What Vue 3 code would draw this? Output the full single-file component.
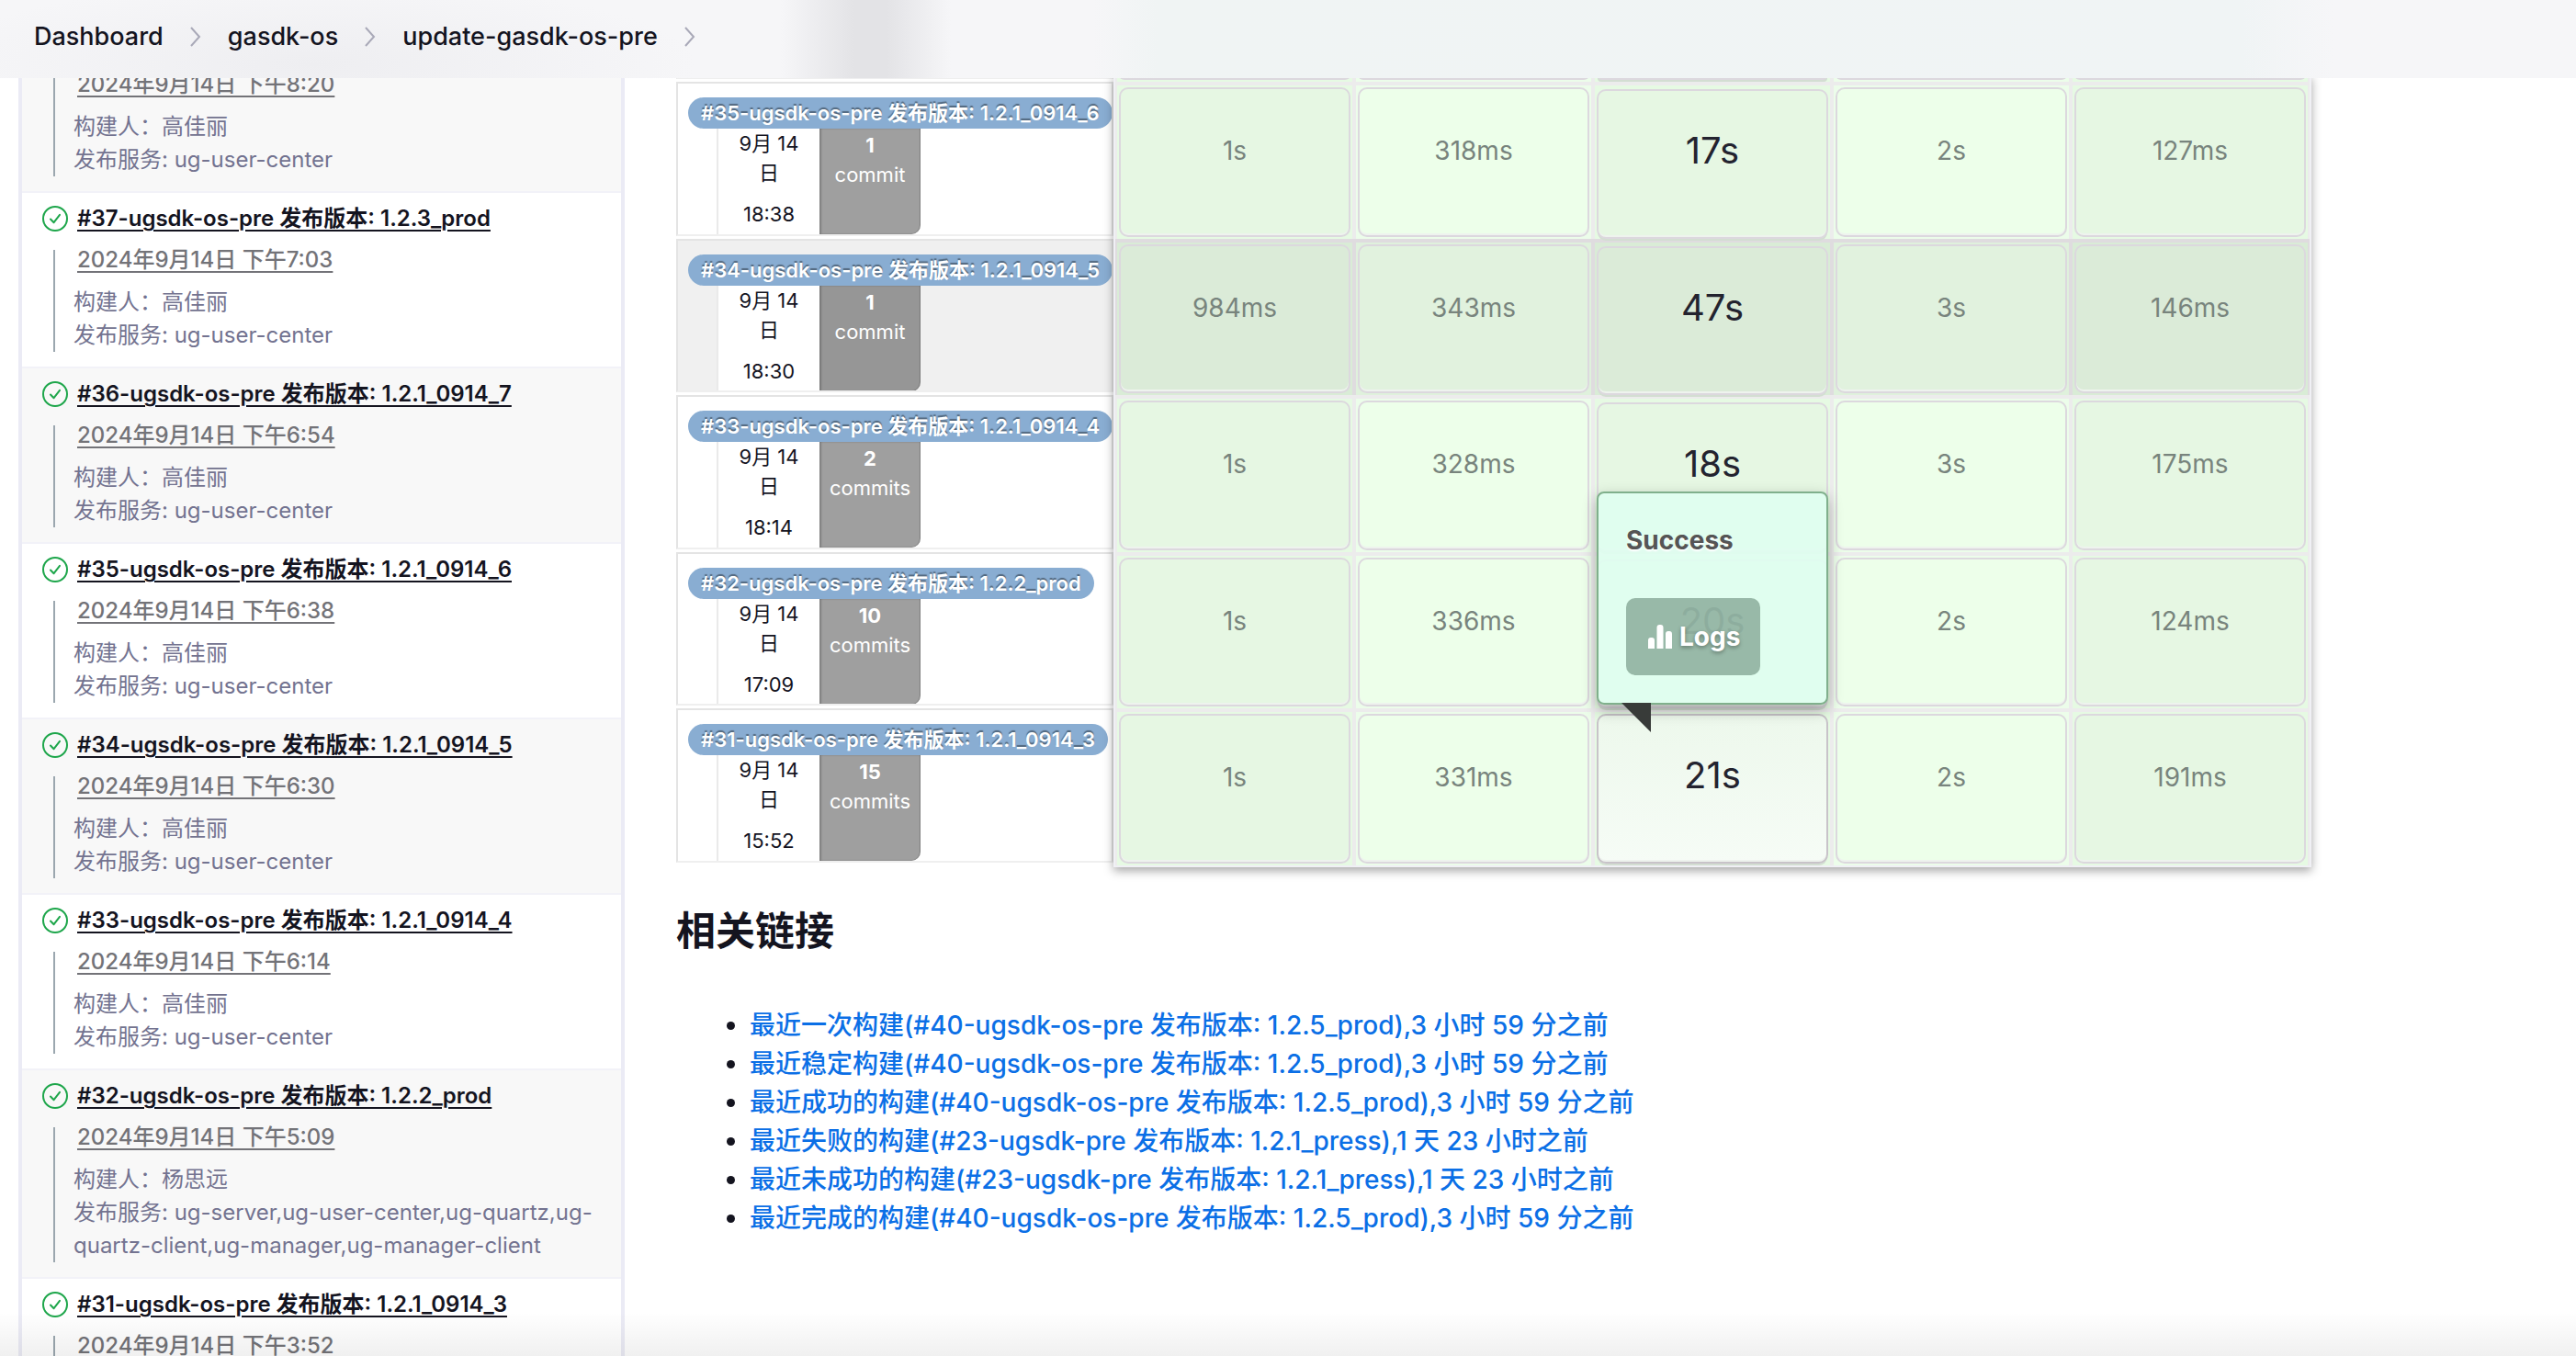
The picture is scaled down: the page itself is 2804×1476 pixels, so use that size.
<script setup>
const crumbs = ['Dashboard', 'gasdk-os', 'update-gasdk-os-pre']

const history = [
  { id: 38, time: '下午8:20', user: '高佳丽', services: 'ug-user-center' },
  { id: 37, title: '#37-ugsdk-os-pre 发布版本: 1.2.3_prod', time: '下午7:03', user: '高佳丽', services: 'ug-user-center' },
  { id: 36, title: '#36-ugsdk-os-pre 发布版本: 1.2.1_0914_7', time: '下午6:54', user: '高佳丽', services: 'ug-user-center' },
  { id: 35, title: '#35-ugsdk-os-pre 发布版本: 1.2.1_0914_6', time: '下午6:38', user: '高佳丽', services: 'ug-user-center' },
  { id: 34, title: '#34-ugsdk-os-pre 发布版本: 1.2.1_0914_5', time: '下午6:30', user: '高佳丽', services: 'ug-user-center' },
  { id: 33, title: '#33-ugsdk-os-pre 发布版本: 1.2.1_0914_4', time: '下午6:14', user: '高佳丽', services: 'ug-user-center' },
  { id: 32, title: '#32-ugsdk-os-pre 发布版本: 1.2.2_prod', time: '下午5:09', user: '杨思远', services: 'ug-server,ug-user-center,ug-quartz,ug-quartz-client,ug-manager,ug-manager-client' },
  { id: 31, title: '#31-ugsdk-os-pre 发布版本: 1.2.1_0914_3', time: '下午3:52' }
]

const runs = [
  { id: 35, version: '1.2.1_0914_6', time: '18:38', commits: 1, stages: ['1s', '318ms', '17s', '2s', '127ms'] },
  { id: 34, version: '1.2.1_0914_5', time: '18:30', commits: 1, stages: ['984ms', '343ms', '47s', '3s', '146ms'], hovered: true },
  { id: 33, version: '1.2.1_0914_4', time: '18:14', commits: 2, stages: ['1s', '328ms', '18s', '3s', '175ms'] },
  { id: 32, version: '1.2.2_prod', time: '17:09', commits: 10, stages: ['1s', '336ms', '20s', '2s', '124ms'] },
  { id: 31, version: '1.2.1_0914_3', time: '15:52', commits: 15, stages: ['1s', '331ms', '21s', '2s', '191ms'], popup: 2 }
]

const links = [
  '最近一次构建(#40-ugsdk-os-pre 发布版本: 1.2.5_prod),3 小时 59 分之前',
  '最近稳定构建(#40-ugsdk-os-pre 发布版本: 1.2.5_prod),3 小时 59 分之前',
  '最近成功的构建(#40-ugsdk-os-pre 发布版本: 1.2.5_prod),3 小时 59 分之前',
  '最近失败的构建(#23-ugsdk-pre 发布版本: 1.2.1_press),1 天 23 小时之前',
  '最近未成功的构建(#23-ugsdk-pre 发布版本: 1.2.1_press),1 天 23 小时之前',
  '最近完成的构建(#40-ugsdk-os-pre 发布版本: 1.2.5_prod),3 小时 59 分之前'
]
</script>

<template>
  <div class="page">
    <header class="topbar">
      <nav class="crumbs" aria-label="Breadcrumb">
        <template v-for="c in crumbs" :key="c">
          <a href="#">{{ c }}</a>
          <svg class="chevron" width="12" height="22" viewBox="0 0 12 22" aria-hidden="true">
            <path d="M1 1l9 10-9 10" />
          </svg>
        </template>
      </nav>
    </header>

    <div class="workspace">
      <aside class="sidebar">
        <ul class="history">
          <li v-for="b in history" :key="b.id" class="build" :class="{ partial: !b.title }">
            <div v-if="b.title" class="build-head">
              <svg class="ok" width="30" height="30" viewBox="0 0 30 30" aria-hidden="true">
                <circle cx="15" cy="15" r="13" />
                <path d="M10 15.500l3.600 3.700 6.400-8.400" />
              </svg>
              <a href="#" class="build-title">{{ b.title }}</a>
            </div>
            <div class="details">
              <a href="#" class="date">2024年9月14日 {{ b.time }}</a>
              <p v-if="b.user" class="desc">构建人：{{ b.user }}</p>
              <p v-if="b.services" class="desc">发布服务: {{ b.services }}</p>
            </div>
          </li>
        </ul>
      </aside>

      <main class="main">
        <section class="stage-view">
          <ol class="runs">
            <li class="run stub"><div class="run-box"></div></li>
            <li v-for="r in runs" :key="r.id" class="run" :class="{ hovered: r.hovered }">
              <div class="run-box">
                <span class="badge">#{{ r.id }}-ugsdk-os-pre 发布版本: {{ r.version }}</span>
                <div class="run-info">
                  <div class="gutter"></div>
                  <div class="when">
                    <div>9月 14日</div>
                    <div class="clock">{{ r.time }}</div>
                  </div>
                  <div class="commits">
                    <strong>{{ r.commits }}</strong>
                    <span>{{ r.commits > 1 ? 'commits' : 'commit' }}</span>
                  </div>
                </div>
              </div>
            </li>
          </ol>

          <table class="stages">
            <tbody>
              <tr class="stub">
                <td v-for="i in 5" :key="i"><div class="cell"></div></td>
              </tr>
              <tr v-for="r in runs" :key="r.id" :class="{ hovered: r.hovered }">
                <td v-for="(s, i) in r.stages" :key="i">
                  <div class="cell" :class="{ active: r.popup === i }">
                    {{ s }}
                    <div v-if="r.popup === i" class="popup">
                      <div class="status">Success</div>
                      <button type="button" class="logs">
                        <svg width="26" height="26" viewBox="0 0 26 26" aria-hidden="true">
                          <path d="M0 26V17q0-3 3-3h1q3 0 3 3v9zM9.500 26V3q0-3 3-3h1q3 0 3 3v23zM19 26V10q0-3 3-3h1q3 0 3 3v16z" />
                        </svg>
                        <span>Logs</span>
                      </button>
                    </div>
                  </div>
                </td>
              </tr>
            </tbody>
          </table>
        </section>

        <h2>相关链接</h2>
        <ul class="permalinks">
          <li v-for="l in links" :key="l"><a href="#">{{ l }}</a></li>
        </ul>
      </main>
    </div>
    <div class="dock-shade"></div>
  </div>
</template>

<style>
body {
  margin: 0;
  background: #fff;
}
</style>

<style scoped>
.page {
  height: 100vh;
  overflow: hidden;
  position: relative;
  font-family: Inter, "Noto Sans CJK SC", sans-serif;
  color: #14141f;
}

.topbar {
  position: relative;
  z-index: 5;
  box-sizing: border-box;
  height: 85px;
  padding: 23px 37px 0;
  background:
    linear-gradient(90deg, transparent 850px, #e3e3e6 930px, #e3e3e6 965px, transparent 1035px),
    linear-gradient(90deg, transparent 1190px, #f0f4f4 1260px, #f0f4f5 2440px, transparent 2540px),
    radial-gradient(ellipse 420px 90px at 340px 70px, #eeeef1, transparent),
    #f6f6f8;
}

.crumbs {
  display: flex;
  align-items: center;
  gap: 29px;
  line-height: 34px;
  font-size: 27px;
  font-weight: 500;
}

.crumbs a {
  color: #14141f;
  text-decoration: none;
}

.chevron {
  fill: none;
  stroke: #a9a9b8;
  stroke-width: 2;
}

.workspace {
  display: flex;
  gap: 56px;
  margin-top: -4px;
}

.sidebar {
  flex: none;
  box-sizing: border-box;
  width: 660px;
  margin-left: 20px;
  border: solid #ebebf5;
  border-width: 0 4px;
}

.history {
  margin: 0;
  padding: 0;
  list-style: none;
}

.build {
  padding: 10px 20px 16px;
  border-bottom: 2px solid #f2f2f8;
}

.build.partial {
  padding-top: 0;
}

.build:nth-child(odd) {
  background: #f8f8f8;
}

.build-head {
  display: flex;
  align-items: center;
  gap: 9px;
  height: 36px;
  margin: 0 0 16px 1px;
}

.ok {
  flex: none;
  fill: none;
  stroke: #1ea64b;
  stroke-width: 2;
  stroke-linecap: round;
  stroke-linejoin: round;
}

.build-title {
  font-size: 24px;
  line-height: 34px;
  font-weight: 600;
  color: #14141f;
  text-decoration-thickness: 2px;
  text-underline-offset: 4px;
  white-space: nowrap;
}

.details {
  margin-left: 14px;
  padding-left: 20px;
  border-left: 2px solid #9ba7af;
  font-size: 24px;
}

.date {
  display: block;
  width: max-content;
  margin: 0 0 17px 4px;
  line-height: 22px;
  font-weight: 500;
  color: #737378;
  text-decoration-thickness: 2px;
  text-underline-offset: 4px;
}

.desc {
  margin: 0;
  line-height: 36px;
  color: #737390;
}

.main {
  flex: 1;
  min-width: 0;
}

.stage-view {
  display: flex;
  align-items: flex-start;
}

.runs {
  flex: none;
  width: 476px;
  margin: 0;
  padding: 0;
  list-style: none;
}

.run {
  box-sizing: border-box;
  height: 170px;
  padding-bottom: 3px;
}

.run:nth-child(even) {
  height: 171px;
}

.run.stub {
  height: 8px;
}

.run-box {
  box-sizing: border-box;
  height: 100%;
  overflow: hidden;
  border: 2px solid #e4e4e4;
  border-bottom-color: #efefef;
}

.badge {
  display: block;
  width: max-content;
  margin: 15px 0 0 11px;
  padding: 0 14px;
  border-radius: 17px;
  background: #89add2;
  color: #fff;
  font-size: 22px;
  line-height: 34px;
  font-weight: 600;
  text-shadow: 0 -2px 1px rgba(0, 0, 0, 0.4);
}

.run-info {
  display: flex;
  height: 115px;
  font-size: 22px;
  line-height: 32px;
  text-align: center;
}

.gutter {
  width: 42px;
  border-right: 2px solid #eaeaea;
}

.when {
  box-sizing: border-box;
  width: 110px;
  padding: 0 18px;
  background: #fff;
}

.clock {
  margin-top: 13px;
}

.commits {
  display: flex;
  flex-direction: column;
  box-sizing: border-box;
  width: 110px;
  padding-top: 2px;
  border-radius: 0 0 10px 0;
  background: #9f9f9f;
  box-shadow: inset 2px 0 2px rgba(0, 0, 0, 0.2), inset -1px 0 1px rgba(0, 0, 0, 0.2);
  color: #fff;
}

.hovered .run-box {
  background: #f0f0f0;
}

.hovered .commits {
  background: #969696;
}

.stages {
  flex: none;
  position: relative;
  border-collapse: separate;
  border-spacing: 0;
  border: solid #f0f0f5;
  border-width: 0 2px 2px;
  box-shadow: 0 4px 10px rgba(0, 0, 0, 0.35);
}

td {
  padding: 2px;
  border: solid #ececec;
  border-width: 4px 2px 0;
  background: #e6fae3;
}

.cell {
  box-sizing: border-box;
  position: relative;
  width: 252px;
  height: 162px;
  border: 2px solid #dcd8de;
  border-radius: 10px;
  background: #e6f7e3;
  box-shadow: inset 0 -2px 0 #eef3ee;
  text-align: center;
  font-size: 28px;
  line-height: 134px;
  color: #78847d;
}

tr:nth-child(even) .cell {
  height: 163px;
}

td:nth-child(even) {
  background: #ecfdea;
}

td:nth-child(even) .cell {
  background: #edffea;
}

td:nth-child(3) .cell {
  margin-bottom: -3px;
  font-size: 40px;
  line-height: 130px;
  color: #23232f;
  box-shadow: inset 0 -2px 0 #eef3ee, 0 3px 0 -1px #d3ded2;
}

.stages .stub .cell {
  height: 6px;
  margin-bottom: 0;
  border-top: 0;
  border-radius: 0 0 10px 10px;
  line-height: 0;
}

.stages .stub td {
  border-top: 0;
  padding-top: 0;
}

.hovered td {
  border-color: #dfdcdf;
  background: #d9ecd6;
}

.hovered .cell {
  background: #dbebd8;
}

.hovered td:nth-child(even) {
  background: #dff1dc;
}

.hovered td:nth-child(even) .cell {
  background: #e1f2de;
}

td .cell.active {
  margin-bottom: 0;
  border-color: #c8c3c9;
  background: linear-gradient(#edf8ec, #f6fcf6);
}

.popup {
  position: absolute;
  z-index: 3;
  left: -2px;
  bottom: 171px;
  box-sizing: border-box;
  width: 252px;
  height: 232px;
  padding: 34px 30px;
  border: 2px solid #80b08c;
  border-radius: 8px;
  background: rgba(224, 254, 240, 0.92);
  box-shadow: 0 6px 16px rgba(0, 0, 0, 0.3);
  text-align: left;
}

.popup::after {
  content: "";
  position: absolute;
  left: 25px;
  top: 228px;
  width: 32px;
  height: 32px;
  background: #383b39;
  clip-path: polygon(0 0, 100% 0, 100% 100%);
}

.status {
  margin-bottom: 46px;
  font-size: 28px;
  line-height: 34px;
  font-weight: 700;
  color: #555;
  text-shadow: 0 2px 2px #fff;
}

.logs {
  display: flex;
  align-items: center;
  gap: 8px;
  height: 84px;
  padding: 0 22px 0 24px;
  border: 0;
  border-radius: 10px;
  background: rgba(0, 40, 20, 0.32);
  color: #fff;
  font: 700 28px/34px Inter, sans-serif;
  text-shadow: 0 2px 4px rgba(0, 0, 0, 0.35);
}

.logs svg {
  fill: #fff;
}

h2 {
  margin: 37px 0 50px;
  font-size: 43px;
  line-height: 64px;
  font-weight: 700;
}

.permalinks {
  margin: 0;
  padding-left: 80px;
  font-size: 28px;
  line-height: 42px;
  font-weight: 500;
}

.permalinks a {
  color: #0b6fe6;
  text-decoration: none;
}

.dock-shade {
  position: absolute;
  z-index: 6;
  left: 0;
  right: 0;
  bottom: 0;
  height: 48px;
  background: linear-gradient(transparent, rgba(0, 0, 0, 0.06));
  pointer-events: none;
}
</style>
